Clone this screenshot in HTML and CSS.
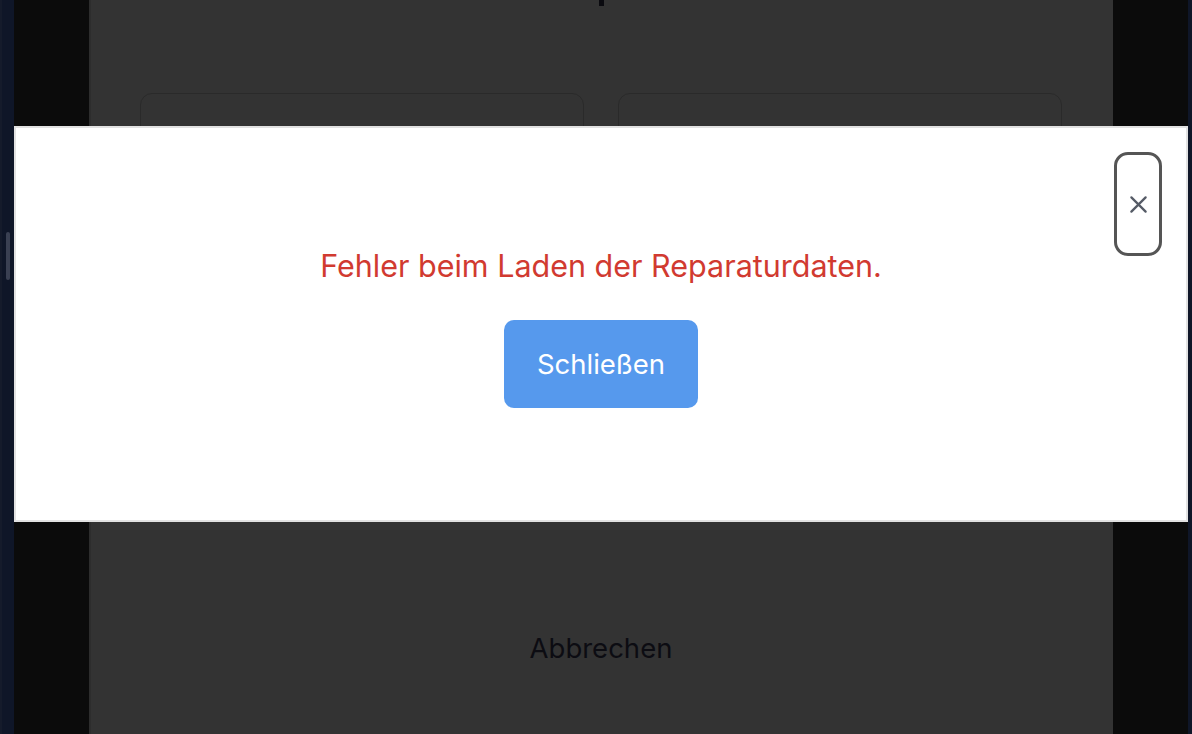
FILE: index.html
```html
<!DOCTYPE html>
<html lang="de">
<head>
<meta charset="utf-8">
<title>Reparatur</title>
<link rel="stylesheet" href="styles.css">
</head>
<body>
<div class="app">
  <div class="rail"><div class="thumb"></div></div>
  <div class="backdrop">
    <main class="panel">
      <div class="title-tail"></div>
      <div class="cards">
        <div class="card"></div>
        <div class="card"></div>
      </div>
      <div class="cancel">Abbrechen</div>
    </main>
  </div>
  <div class="rail-right"></div>
</div>

<div class="modal" role="dialog">
  <button class="close" aria-label="Schließen">
    <svg width="20" height="20" viewBox="0 0 20 20"><path d="M2.5 2.5 L17.5 17.5 M17.5 2.5 L2.5 17.5" stroke="#555b66" stroke-width="2.4" stroke-linecap="round" fill="none"/></svg>
  </button>
  <p class="error">Fehler beim Laden der Reparaturdaten.</p>
  <button class="primary">Schließen</button>
</div>
</body>
</html>
```

FILE: styles.css
```css
html, body {
  margin: 0;
  padding: 0;
  height: 100%;
  overflow: hidden;
}
body {
  font-family: Inter, "Noto Sans", "Liberation Sans", sans-serif;
  background: #0b0b0b;
}
.app {
  display: flex;
  height: 734px;
}
.rail {
  width: 14px;
  background: #0f1628;
  border-left: 2px solid #151b2b;
  box-sizing: border-box;
  position: relative;
}
.thumb {
  position: absolute;
  left: 4px;
  top: 232px;
  width: 4px;
  height: 48px;
  background: #3a4052;
  border-radius: 2px;
}
.rail-right {
  width: 4px;
  background: #0f1628;
}
.backdrop {
  flex: 1;
  display: flex;
  justify-content: center;
  background: #0b0b0b;
}
.panel {
  width: 1024px;
  box-sizing: border-box;
  background: #333333;
  border-left: 2px solid #2d2d2d;
  display: flex;
  flex-direction: column;
  align-items: center;
  padding: 0 51px 0 49px;
}
.title-tail {
  width: 5px;
  height: 6px;
  background: #0a0a0f;
  margin-left: 1px;
}
.cards {
  margin-top: 87px;
  width: 100%;
  display: flex;
  gap: 34px;
}
.card {
  flex: 1;
  height: 420px;
  border: 1px solid #2a2a2a;
  border-radius: 12px;
}
.cancel {
  margin-top: 116px;
  font-size: 27.5px;
  color: #0c0c12;
}
.modal {
  position: absolute;
  left: 14px;
  top: 126px;
  width: 1174px;
  height: 396px;
  box-sizing: border-box;
  background: #ffffff;
  border: 2px solid #e2e2e2;
  display: flex;
  flex-direction: column;
  align-items: center;
  padding-top: 121px;
}
.close {
  position: absolute;
  right: 24px;
  top: 24px;
  width: 48px;
  height: 104px;
  box-sizing: border-box;
  background: #fff;
  border: 3px solid #555555;
  border-radius: 14px;
  display: flex;
  align-items: center;
  justify-content: center;
  padding: 0;
}
.close svg { width: 19px; height: 19px; }
.error {
  margin: 0;
  font-size: 30.5px;
  color: #d13a30;
  line-height: 34px;
}
.primary {
  margin-top: 37px;
  width: 194px;
  height: 88px;
  border: none;
  border-radius: 10px;
  background: #5699ed;
  color: #ffffff;
  font-family: inherit;
  font-size: 27.5px;
}
```
